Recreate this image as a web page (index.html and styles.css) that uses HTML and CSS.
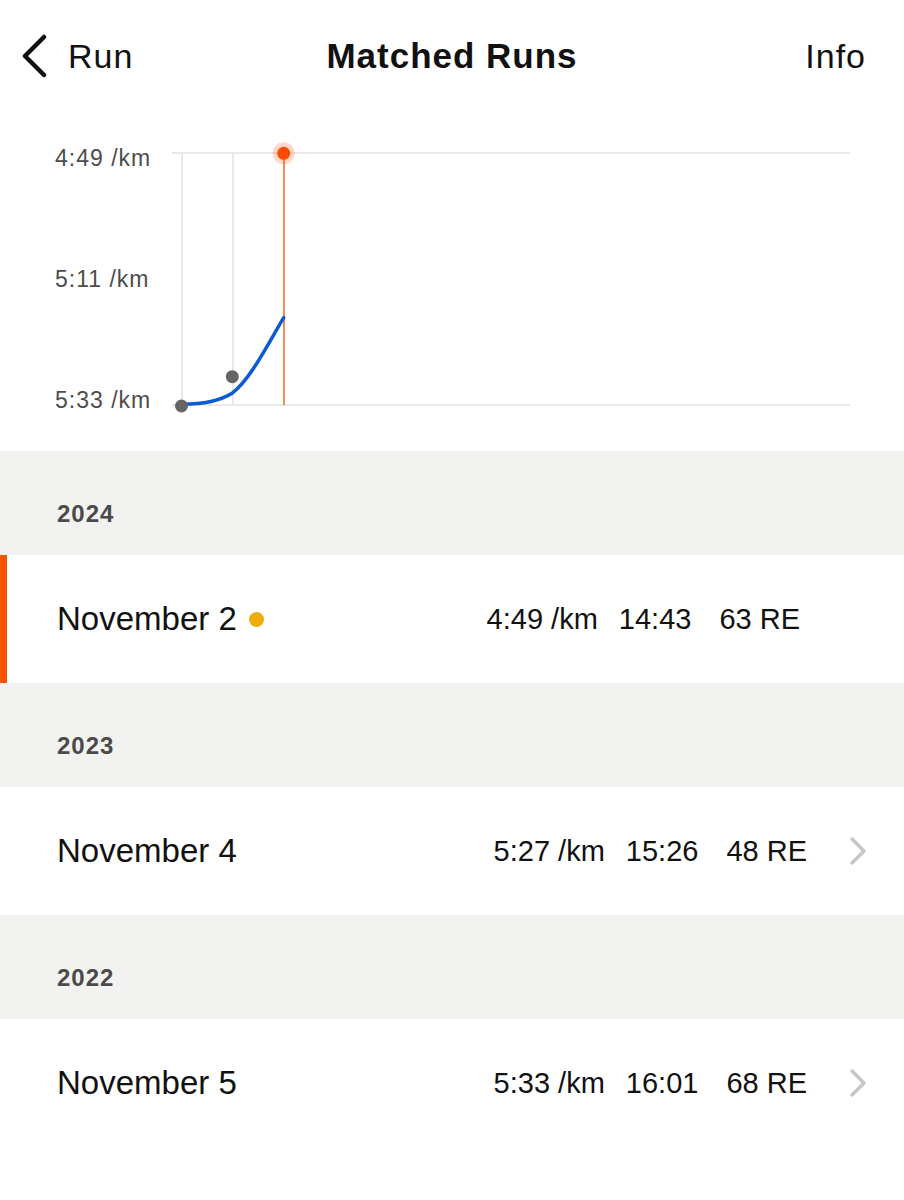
FILE: index.html
```html
<!DOCTYPE html>
<html>
<head>
<meta name="viewport" content="width=device-width, initial-scale=1">
<title>Matched Runs</title>
<link rel="stylesheet" href="styles.css">
</head>
<body>
<header class="topbar">
    <a class="back" href="#">
        <svg class="back-icon" width="28" height="44" viewBox="0 0 28 44"><path d="M24 3 L5 22 L24 41" /></svg>
        <span>Run</span>
    </a>
    <h1 class="title">Matched Runs</h1>
    <a class="info" href="#">Info</a>
</header>

<section class="chart">
    <svg width="904" height="339" viewBox="0 0 904 339">
        <!-- grid -->
        <line class="grid" x1="172" y1="41" x2="850" y2="41" />
        <line class="grid" x1="172" y1="293" x2="850" y2="293" />
        <line class="grid" x1="182" y1="41" x2="182" y2="293" />
        <line class="grid" x1="233" y1="41" x2="233" y2="293" />
        <line class="marker" x1="284" y1="41" x2="284" y2="293" />
        <!-- labels -->
        <text class="axis" x="55" y="54">4:49 /km</text>
        <text class="axis" x="55" y="175">5:11 /km</text>
        <text class="axis" x="55" y="296">5:33 /km</text>
        <!-- trend -->
        <path class="trend" d="M182 292.3 C205 292.3 220 289 232 281.3 C250 268 268 232 283.7 205.7" />
        <circle class="past" cx="181.5" cy="294" r="6.5" />
        <circle class="past" cx="232.3" cy="264.7" r="6.5" />
        <circle class="halo" cx="283.7" cy="41.3" r="11" />
        <circle class="current" cx="283.7" cy="41.3" r="6.5" />
    </svg>
</section>

<section class="runs">
    <div class="year">2024</div>
    <div class="run current">
        <span class="date">November 2 <i class="dot"></i></span>
        <span class="stats">
            <span class="pace">4:49 /km</span>
            <span class="time">14:43</span>
            <span class="effort">63 RE</span>
        </span>
    </div>

    <div class="year">2023</div>
    <div class="run">
        <span class="date">November 4</span>
        <span class="stats">
            <span class="pace">5:27 /km</span>
            <span class="time">15:26</span>
            <span class="effort">48 RE</span>
        </span>
        <svg class="chevron" width="20" height="30" viewBox="0 0 20 30"><path d="M4 3 L16 15 L4 27" /></svg>
    </div>

    <div class="year">2022</div>
    <div class="run">
        <span class="date">November 5</span>
        <span class="stats">
            <span class="pace">5:33 /km</span>
            <span class="time">16:01</span>
            <span class="effort">68 RE</span>
        </span>
        <svg class="chevron" width="20" height="30" viewBox="0 0 20 30"><path d="M4 3 L16 15 L4 27" /></svg>
    </div>
</section>
</body>
</html>
```

FILE: styles.css
```css
body {
	margin: 0;
	background: #fff;
	color: #111;
	font-family: "Liberation Sans", Arial, sans-serif;
}
a {
	color: inherit;
	text-decoration: none;
}

/* top bar */
.topbar {
	height: 112px;
	display: grid;
	grid-template-columns: 1fr auto 1fr;
	align-items: center;
	font-size: 34px;
	letter-spacing: 1px;
}
.back {
	display: flex;
	align-items: center;
	gap: 20px;
	padding-left: 20px;
}
.back-icon path {
	fill: none;
	stroke: #111;
	stroke-width: 4.5;
	stroke-linecap: round;
	stroke-linejoin: round;
}
.title {
	margin: 0;
	font-size: 35px;
	font-weight: bold;
}
.info {
	justify-self: end;
	padding-right: 38px;
}

/* chart */
.chart svg {
	display: block;
}
.grid {
	stroke: #e2e2e2;
	stroke-width: 1.5;
}
.marker {
	stroke: #f26522;
	stroke-width: 1.5;
}
.axis {
	font-family: "Liberation Sans", Arial, sans-serif;
	font-size: 23px;
	letter-spacing: 1px;
	fill: #4d4d4d;
}
.trend {
	fill: none;
	stroke: #0b5bd3;
	stroke-width: 3.5;
	stroke-linecap: round;
}
.past {
	fill: #656565;
}
.halo {
	fill: #fc5200;
	opacity: 0.22;
}
.current {
	fill: #fc4c02;
}

/* list */
.year {
	height: 104px;
	box-sizing: border-box;
	padding: 48px 0 0 57px;
	line-height: 30px;
	background: #f2f2f1;
	color: #4a4a4a;
	font-size: 24px;
	font-weight: bold;
	letter-spacing: 1px;
}
.run {
	height: 128px;
	display: flex;
	align-items: center;
	padding: 0 36px 0 57px;
}
.run.current {
	box-shadow: inset 7px 0 0 #fc5200;
	padding-right: 104px;
}
.date {
	flex: 1;
	font-size: 33px;
	display: flex;
	align-items: center;
}
.dot {
	width: 15px;
	height: 15px;
	margin-left: 12px;
	border-radius: 50%;
	background: #f0ac0f;
}
.stats {
	display: flex;
	font-size: 29px;
}
.time {
	margin-left: 21px;
}
.effort {
	margin-left: 28px;
}
.chevron {
	margin-left: 41px;
}
.chevron path {
	fill: none;
	stroke: #c6c6c6;
	stroke-width: 3.5;
	stroke-linecap: round;
	stroke-linejoin: round;
}
```
